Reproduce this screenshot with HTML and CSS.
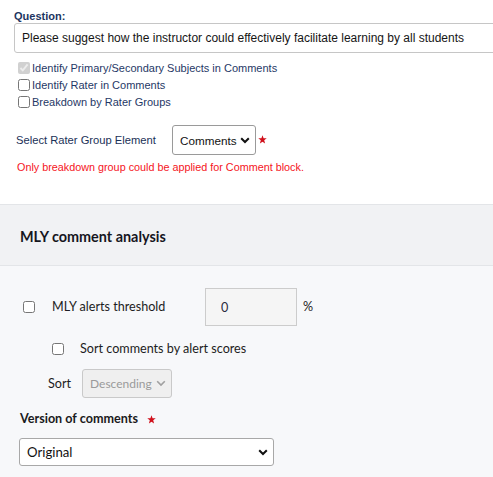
FILE: index.html
```html
<!DOCTYPE html>
<html lang="en">
<head>
<meta charset="utf-8">
<title>Comment block settings</title>
<link rel="stylesheet" href="styles.css">
</head>
<body>
<div class="page">
  <section class="top">
    <div class="q-label">Question:</div>
    <input class="q-input" type="text" value="Please suggest how the instructor could effectively facilitate learning by all students">
    <div class="opts">
      <label class="opt"><input type="checkbox" checked disabled><span>Identify Primary/Secondary Subjects in Comments</span></label>
      <label class="opt"><input type="checkbox"><span>Identify Rater in Comments</span></label>
      <label class="opt"><input type="checkbox"><span>Breakdown by Rater Groups</span></label>
    </div>
    <div class="rater-row">
      <span class="rater-label">Select Rater Group Element</span>
      <select class="sel sel-rater"><option>Comments</option></select>
      <svg class="star star-top" viewBox="0 0 10 10" width="9" height="9"><polygon points="5,0.3 6.2,3.6 9.7,3.7 6.9,5.9 7.9,9.4 5,7.4 2.1,9.4 3.1,5.9 0.3,3.7 3.8,3.6" fill="#d0101b"/></svg>
    </div>
    <div class="warn">Only breakdown group could be applied for Comment block.</div>
  </section>
  <section class="band">
    <h2 class="band-title">MLY comment analysis</h2>
  </section>
  <section class="mly">
    <div class="row-threshold">
      <input class="cb" type="checkbox">
      <span class="lbl lbl-threshold">MLY alerts threshold</span>
      <input class="num" type="text" value="0" readonly>
      <span class="lbl pct">%</span>
    </div>
    <div class="row-sort-cb">
      <input class="cb" type="checkbox">
      <span class="lbl lbl-sortcb">Sort comments by alert scores</span>
    </div>
    <div class="row-sort">
      <span class="lbl lbl-sort">Sort</span>
      <select class="sel sel-sort" disabled><option>Descending</option></select>
    </div>
    <div class="version-label">
      <span>Version of comments</span>
      <svg class="star star-ver" viewBox="0 0 10 10" width="9" height="9"><polygon points="5,0.3 6.2,3.6 9.7,3.7 6.9,5.9 7.9,9.4 5,7.4 2.1,9.4 3.1,5.9 0.3,3.7 3.8,3.6" fill="#d0101b"/></svg>
    </div>
    <select class="sel sel-version"><option>Original</option></select>
  </section>
</div>
</body>
</html>
```
FILE: styles.css
```css
html, body {
  margin: 0;
  padding: 0;
}
body {
  width: 493px;
  height: 477px;
  overflow: hidden;
  background: #f7f8fa;
}
.page {
  width: 493px;
}
.top {
  background: #ffffff;
  height: 204px;
  box-sizing: border-box;
  padding: 10px 0 0 14px;
  font-family: "Liberation Sans", Arial, sans-serif;
}
.q-label {
  font-size: 11px;
  line-height: 13px;
  font-weight: bold;
  color: #1c3561;
}
.q-input {
  display: block;
  box-sizing: border-box;
  width: 500px;
  height: 30px;
  margin: 0;
  padding: 0 7px;
  border: 1px solid #c6c6c6;
  border-radius: 3px;
  font-family: "Liberation Sans", Arial, sans-serif;
  font-size: 12px;
  color: #151515;
  background: #fff;
  outline: none;
}
.opts {
  margin-top: 6px;
  display: flex;
  flex-direction: column;
}
.opt {
  display: flex;
  align-items: center;
  height: 17px;
  font-size: 11px;
  color: #1f3866;
}
.opt input {
  width: 12px;
  height: 12px;
  margin: 0 2px 0 4px;
}
.rater-row {
  display: flex;
  align-items: center;
  margin-top: 15px;
  height: 30px;
}
.rater-label {
  margin-left: 2px;
  width: 156px;
  font-size: 11.2px;
  color: #1a3157;
}
.sel {
  -webkit-appearance: none;
  appearance: none;
  box-sizing: border-box;
  margin: 0;
  border-radius: 3px;
  background-color: #fff;
  background-repeat: no-repeat;
  background-image: url("data:image/svg+xml,%3Csvg xmlns='http://www.w3.org/2000/svg' width='10' height='7' viewBox='0 0 10 7'%3E%3Cpath d='M1.2 1.2 L5 5 L8.8 1.2' fill='none' stroke='%23111' stroke-width='2'/%3E%3C/svg%3E");
  outline: none;
}
.sel-rater {
  width: 84px;
  height: 30px;
  padding: 0 0 0 7px;
  border: 1px solid #9a9a9a;
  font-family: "Liberation Sans", Arial, sans-serif;
  font-size: 11.7px;
  color: #111;
  background-position: right 5px center;
}
.star {
  display: block;
}
.star-top {
  margin-left: 2px;
  margin-top: -1px;
}
.warn {
  margin: 6px 0 0 3px;
  font-size: 10.8px;
  line-height: 13px;
  color: #f5141c;
}
.band {
  box-sizing: border-box;
  height: 62px;
  border-top: 1px solid #e3e5e8;
  border-bottom: 1px solid #e3e5e8;
  background: #f1f2f4;
  display: flex;
  align-items: center;
  padding: 2px 0 0 20px;
}
.band-title {
  margin: 0;
  font-family: Lato, "Noto Sans", sans-serif;
  font-size: 14.4px;
  font-weight: bold;
  color: #16161e;
}
.mly {
  font-family: Lato, "Noto Sans", sans-serif;
  color: #1d1d22;
  padding-top: 22px;
  display: flex;
  flex-direction: column;
}
.lbl {
  font-size: 12.6px;
  line-height: 16px;
}
.cb {
  width: 12px;
  height: 12px;
  margin: 0;
}
.row-threshold {
  display: flex;
  align-items: center;
  height: 38px;
  padding-left: 23px;
}
.lbl-threshold {
  margin-left: 17px;
  width: 153px;
}
.num {
  box-sizing: border-box;
  width: 92px;
  height: 38px;
  margin: 0;
  padding: 0 0 0 15px;
  border: 1px solid #cccccc;
  background: #f5f5f5;
  font-family: Lato, "Noto Sans", sans-serif;
  font-size: 12.6px;
  color: #2a2a40;
  outline: none;
}
.pct {
  margin-left: 6px;
}
.row-sort-cb {
  display: flex;
  align-items: center;
  height: 20px;
  margin-top: 13px;
  padding-left: 52px;
}
.lbl-sortcb {
  margin-left: 16px;
}
.row-sort {
  display: flex;
  align-items: center;
  margin-top: 10px;
  padding-left: 48px;
}
.lbl-sort {
  width: 34px;
}
.sel-sort {
  width: 90px;
  height: 29px;
  padding: 0 0 0 7px;
  border: 1px solid #c9c9c9;
  background-color: #efefef;
  font-family: Lato, "Noto Sans", sans-serif;
  font-size: 12px;
  color: #9a9a9a;
  opacity: 1;
  background-image: url("data:image/svg+xml,%3Csvg xmlns='http://www.w3.org/2000/svg' width='10' height='7' viewBox='0 0 10 7'%3E%3Cpath d='M1.2 1.2 L5 5 L8.8 1.2' fill='none' stroke='%23a0a0a0' stroke-width='1.6'/%3E%3C/svg%3E");
  background-position: right 5px center;
}
.version-label {
  display: flex;
  align-items: center;
  margin-top: 13px;
  padding-left: 20px;
  font-size: 12.6px;
  line-height: 16px;
  font-weight: bold;
  color: #1a1a20;
}
.star-ver {
  margin-left: 9px;
}
.sel-version {
  margin: 11px 0 0 19px;
  width: 255px;
  height: 28px;
  padding: 0 0 0 7px;
  border: 1px solid #a8a8a8;
  font-family: Lato, "Noto Sans", sans-serif;
  font-size: 13.2px;
  color: #111;
  background-position: right 5px center;
}
```
